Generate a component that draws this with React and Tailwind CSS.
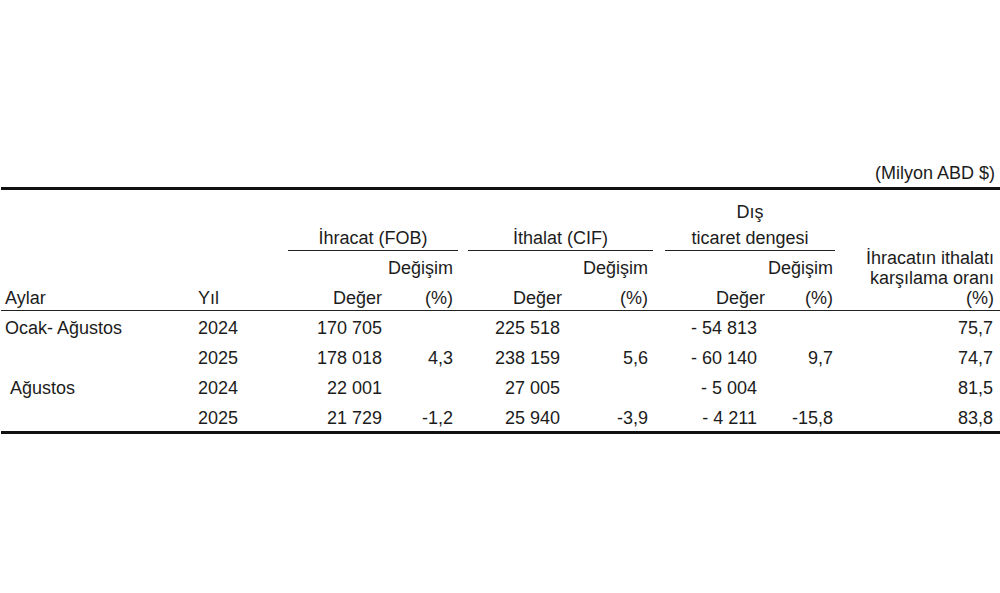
import React from "react";

const rows = [
  { ay: "Ocak- Ağustos", ayPad: "pl-[5px]", yil: "2024", iv: "170 705", ip: "", tv: "225 518", tp: "", dv: "- 54 813", dp: "", k: "75,7" },
  { ay: "", ayPad: "pl-[5px]", yil: "2025", iv: "178 018", ip: "4,3", tv: "238 159", tp: "5,6", dv: "- 60 140", dp: "9,7", k: "74,7" },
  { ay: "Ağustos", ayPad: "pl-[10px]", yil: "2024", iv: "22 001", ip: "", tv: "27 005", tp: "", dv: "- 5 004", dp: "", k: "81,5" },
  { ay: "", ayPad: "pl-[10px]", yil: "2025", iv: "21 729", ip: "-1,2", tv: "25 940", tp: "-3,9", dv: "- 4 211", dp: "-15,8", k: "83,8" },
];

const cols = "grid grid-cols-[198px_90px_100px_70px_10px_100px_85px_12px_100px_70px_1fr]";

export default function App() {
  return (
    <div
      className="w-[1000px] h-[593px] bg-white text-[#1c1c1c] text-[18px] overflow-hidden pt-[163px]"
      style={{ fontFamily: '"Liberation Sans", Arial, sans-serif' }}
    >
      <div className="h-[20px] leading-[20px] text-right pr-[5px]">(Milyon ABD $)</div>
      <div className="mt-[4px] ml-[1px] h-[3px] bg-[#111]" />

      {/* Header */}
      <div className={`${cols} grid-rows-[20px_29px_27px_32px] mt-[12px] leading-[20px]`}>
        {/* row 1 */}
        <div className="col-start-9 col-span-2 row-start-1 text-center">Dış</div>

        {/* row 2: group titles with underline */}
        <div className="col-start-3 col-span-2 row-start-2 flex items-end justify-center pb-[2px] border-b border-[#222]">
          İhracat (FOB)
        </div>
        <div className="col-start-6 col-span-2 row-start-2 flex items-end justify-center pb-[2px] border-b border-[#222]">
          İthalat (CIF)
        </div>
        <div className="col-start-9 col-span-2 row-start-2 flex items-end justify-center pb-[2px] border-b border-[#222]">
          ticaret dengesi
        </div>

        {/* row 3: Değişim */}
        <div className="col-start-4 row-start-3 flex items-end justify-end pr-[5px] whitespace-nowrap">Değişim</div>
        <div className="col-start-7 row-start-3 flex items-end justify-end pr-[5px] whitespace-nowrap">Değişim</div>
        <div className="col-start-10 row-start-3 flex items-end justify-end pr-[2px] whitespace-nowrap">Değişim</div>

        {/* row 4 */}
        <div className="col-start-1 row-start-4 flex items-end pl-[5px] pb-[2px]">Aylar</div>
        <div className="col-start-2 row-start-4 flex items-end pb-[2px]">Yıl</div>
        <div className="col-start-3 row-start-4 flex items-end justify-end pr-[6px] pb-[2px]">Değer</div>
        <div className="col-start-4 row-start-4 flex items-end justify-end pr-[5px] pb-[2px]">(%)</div>
        <div className="col-start-6 row-start-4 flex items-end justify-end pr-[6px] pb-[2px]">Değer</div>
        <div className="col-start-7 row-start-4 flex items-end justify-end pr-[5px] pb-[2px]">(%)</div>
        <div className="col-start-9 row-start-4 flex items-end justify-end pb-[2px]">Değer</div>
        <div className="col-start-10 row-start-4 flex items-end justify-end pr-[2px] pb-[2px]">(%)</div>

        {/* last column */}
        <div className="col-start-11 row-start-1 row-span-4 flex flex-col items-end justify-end pr-[6px] pb-[2px] whitespace-nowrap">
          <div>İhracatın ithalatı</div>
          <div>karşılama oranı</div>
          <div>(%)</div>
        </div>
      </div>
      <div className="ml-[1px] h-[1px] bg-[#222]" />

      {/* Body */}
      <div className="h-[120px] pt-[2px]">
        {rows.map((r, i) => (
          <div key={i} className={`${cols} h-[30px] leading-[30px] whitespace-nowrap`}>
            <div className={r.ayPad}>{r.ay}</div>
            <div>{r.yil}</div>
            <div className="text-right pr-[6px]">{r.iv}</div>
            <div className="text-right pr-[5px]">{r.ip}</div>
            <div />
            <div className="text-right pr-[8px]">{r.tv}</div>
            <div className="text-right pr-[5px]">{r.tp}</div>
            <div />
            <div className="text-right pr-[8px]">{r.dv}</div>
            <div className="text-right pr-[2px]">{r.dp}</div>
            <div className="text-right pr-[7px]">{r.k}</div>
          </div>
        ))}
      </div>
      <div className="ml-[1px] h-[3px] bg-[#111]" />
    </div>
  );
}
